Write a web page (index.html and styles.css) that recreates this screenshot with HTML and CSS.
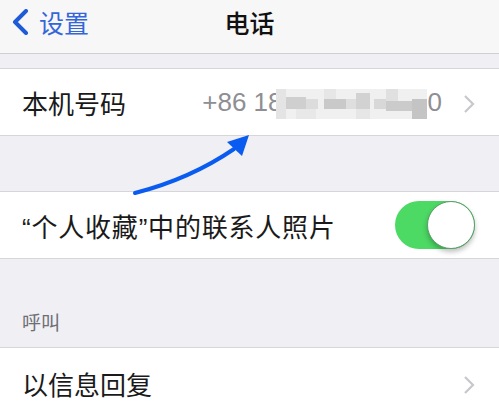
FILE: index.html
```html
<!DOCTYPE html>
<html lang="zh">
<head>
<meta charset="utf-8">
<link rel="stylesheet" href="styles.css">
</head>
<body>
<div class="screen">
  <header class="nav">
    <div class="back">
      <svg class="back-icon" width="20" height="26" viewBox="0 0 20 26"><polyline points="16,2 5,13 16,24" fill="none" stroke="#1f5bd6" stroke-width="4" stroke-linecap="round" stroke-linejoin="round"/></svg>
      <span class="back-text">设置</span>
    </div>
    <div class="title">电话</div>
  </header>
  <div class="gap gap-top"></div>
  <div class="cell">
    <span class="label">本机号码</span>
    <span class="value">
      <span class="num">+86 18</span>
      <svg class="blur" width="151" height="30" viewBox="0 0 151 30">
        <rect x="0" y="0" width="151" height="30" fill="#f0f0f0"/>
        <rect x="0" y="0" width="10" height="30" fill="#e4e4e4"/>
        <rect x="10" y="8" width="20" height="12" fill="#cfcfcf"/>
        <rect x="30" y="10" width="12" height="10" fill="#dcdcdc"/>
        <rect x="48" y="0" width="12" height="10" fill="#e6e6e6"/>
        <rect x="48" y="10" width="22" height="10" fill="#c9c9c9"/>
        <rect x="70" y="10" width="10" height="10" fill="#dedede"/>
        <rect x="80" y="4" width="14" height="16" fill="#d2d2d2"/>
        <rect x="80" y="20" width="14" height="10" fill="#e6e6e6"/>
        <rect x="98" y="10" width="12" height="10" fill="#d8d8d8"/>
        <rect x="110" y="0" width="12" height="12" fill="#e0e0e0"/>
        <rect x="110" y="12" width="26" height="10" fill="#cbcbcb"/>
        <rect x="136" y="10" width="15" height="20" fill="#c4c4c4"/>
        <rect x="20" y="20" width="20" height="10" fill="#e8e8e8"/>
      </svg>
      <span class="num">0</span>
    </span>
    <svg class="chev" width="12" height="20" viewBox="0 0 12 20"><polyline points="2,2 10,10 2,18" fill="none" stroke="#c7c7cc" stroke-width="2.2"/></svg>
  </div>
  <div class="gap gap-mid">
    <svg class="arrow" width="499" height="70" viewBox="0 130 499 70">
      <path d="M135,194 Q190,180 234,150" fill="none" stroke="#0a5cf0" stroke-width="4" stroke-linecap="round"/>
      <polygon points="249,136 227,143 242,157" fill="#0a5cf0"/>
    </svg>
  </div>
  <div class="cell cell-toggle">
    <span class="label label-wide">“个人收藏”中的联系人照片</span>
    <div class="toggle"><div class="knob"></div></div>
  </div>
  <div class="gap gap-head">
    <span class="section">呼叫</span>
  </div>
  <div class="cell cell-last">
    <span class="label">以信息回复</span>
    <svg class="chev" width="12" height="20" viewBox="0 0 12 20"><polyline points="2,2 10,10 2,18" fill="none" stroke="#c7c7cc" stroke-width="2.2"/></svg>
  </div>
</div>
</body>
</html>
```

FILE: styles.css
```css
html, body {
  margin: 0;
  padding: 0;
}
body {
  background: #efeff4;
  font-family: "Liberation Sans", "Noto Sans CJK SC", sans-serif;
  width: 499px;
  height: 410px;
  overflow: hidden;
}
.screen {
  position: relative;
  width: 499px;
  height: 410px;
  overflow: hidden;
}
.nav {
  height: 53px;
  background: #f7f7f8;
  border-bottom: 1px solid #cfcfd3;
  display: flex;
  align-items: center;
  position: relative;
}
.back {
  display: flex;
  align-items: center;
  padding-left: 10px;
  gap: 9px;
  margin-top: -9px;
}
.back-text {
  font-size: 25px;
  color: #3466d8;
}
.title {
  position: absolute;
  left: 0;
  right: 0;
  top: 4px;
  text-align: center;
  font-size: 25px;
  color: #111;
  font-weight: 500;
}
.gap-top {
  height: 14px;
}
.cell {
  background: #fff;
  border-top: 1px solid #d6d6da;
  border-bottom: 1px solid #d6d6da;
  height: 66px;
  display: flex;
  align-items: center;
  padding: 0 24px 0 22px;
}
.label {
  font-size: 26px;
  color: #1a1a1a;
  flex: 1;
}
.label-wide {
  letter-spacing: 0.8px;
}
.value {
  display: flex;
  align-items: center;
  font-size: 26px;
  color: #8e8e93;
  margin-right: 21px;
}
.blur {
  display: block;
  margin-left: -7px;
  margin-right: 1px;
  margin-top: 3px;
}
.chev {
  display: block;
  margin-top: 4px;
}
.gap-mid {
  height: 55px;
  position: relative;
}
.arrow {
  position: absolute;
  left: 0;
  top: -7px;
  overflow: visible;
}
.cell-toggle {
  height: 66px;
}
.toggle {
  width: 80px;
  height: 48px;
  border-radius: 24px;
  background: #4cd964;
  position: relative;
}
.knob {
  position: absolute;
  right: 0;
  top: 0;
  width: 46px;
  height: 46px;
  border-radius: 50%;
  background: #fff;
  border: 1px solid #5a9e6a;
  box-shadow: 0 3px 5px rgba(0,0,0,0.25);
}
.gap-head {
  height: 88px;
  display: flex;
  align-items: flex-end;
  padding-left: 22px;
  box-sizing: border-box;
  padding-bottom: 12px;
}
.section {
  font-size: 19px;
  color: #6d6d72;
}
.cell-last {
  height: 70px;
  border-bottom: none;
}
```
